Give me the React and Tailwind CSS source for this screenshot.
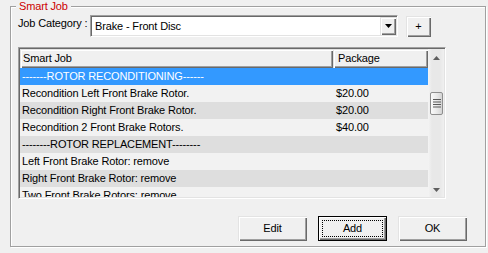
import React from "react";

const raised =
  "bg-[#f0f0f0] shadow-[inset_1px_1px_0_#e3e3e3,inset_2px_2px_0_#ffffff,inset_-1px_-1px_0_#696969,inset_-2px_-2px_0_#a0a0a0]";

const rows = [
  { t: "-------ROTOR RECONDITIONING------", p: "" },
  { t: "Recondition Left Front Brake Rotor.", p: "$20.00" },
  { t: "Recondition Right Front Brake Rotor.", p: "$20.00" },
  { t: "Recondition 2 Front Brake Rotors.", p: "$40.00" },
  { t: "--------ROTOR REPLACEMENT--------", p: "" },
  { t: "Left Front Brake Rotor: remove", p: "" },
  { t: "Right Front Brake Rotor: remove", p: "" },
  { t: "Two Front Brake Rotors: remove", p: "" },
];

function Row({ r, i }) {
  const sel = i === 0;
  const alt = i % 2 === 0 && !sel;
  const bg = sel ? "bg-[#3399ff] text-white" : alt ? "bg-[#dedede]" : "bg-[#f2f2f2]";
  return (
    <div className={`flex h-[17px] shrink-0 leading-[17px] whitespace-nowrap ${bg}`}>
      <div className="w-[313px] pl-[2px] overflow-hidden">{r.t}</div>
      <div className="w-[95px] pl-[3px] overflow-hidden">{r.p}</div>
    </div>
  );
}

function Scrollbar() {
  return (
    <div className="w-[16px] h-full flex flex-col bg-[linear-gradient(to_right,#f4f4f4,#e8e8e8_25%,#e8e8e8_75%,#f0f0f0)]">
      <div className="h-[17px] flex items-center justify-center pl-[1px] pt-[1px]">
        <svg width="7" height="4" viewBox="0 0 7 4">
          <polygon points="3.5,0 7,4 0,4" fill="#5e5e5e" />
        </svg>
      </div>
      <div className="flex-1 flex flex-col">
        <div className="mt-[26px] ml-[2px] w-[13px] h-[23px] rounded-[2px] border border-[#8e8e8e] bg-[linear-gradient(to_right,#fbfbfb,#e6e6e6_60%,#d4d4d4)] flex items-center justify-center">
          <svg width="8" height="9" viewBox="0 0 8 9">
            <rect x="0" y="0" width="8" height="1" fill="#5a5a5a" />
            <rect x="0" y="2.5" width="8" height="1" fill="#5a5a5a" />
            <rect x="0" y="5" width="8" height="1" fill="#5a5a5a" />
            <rect x="0" y="7.5" width="8" height="1" fill="#5a5a5a" />
          </svg>
        </div>
      </div>
      <div className="h-[17px] flex items-center justify-center pl-[1px] pt-[3px]">
        <svg width="7" height="4" viewBox="0 0 7 4">
          <polygon points="0,0 7,0 3.5,4" fill="#5e5e5e" />
        </svg>
      </div>
    </div>
  );
}

export default function App() {
  return (
    <div className="w-[488px] h-[253px] bg-[#f0f0f0] pt-[6px] pl-[10px] font-['Liberation_Sans',Arial,sans-serif] text-[11px] tracking-[-0.15px] text-black overflow-hidden">
      <div className="relative w-[476px] h-[241px] border border-[#a0a0a0] shadow-[inset_1px_1px_0_#ffffff,1px_1px_0_#ffffff] pt-[8px] pl-[7px] flex flex-col">
        <div className="absolute left-[5px] top-[-7px] px-[3px] bg-[#f0f0f0] text-[#cc0000] leading-[13px]">
          Smart Job
        </div>

        <div className="flex items-start h-[22px]">
          <div className="w-[72px] leading-[17px] whitespace-nowrap">Job Category :</div>
          <div className="w-[308px] h-[22px] border border-t-[#a0a0a0] border-l-[#a0a0a0] border-r-white border-b-white shadow-[inset_1px_1px_0_#696969,inset_-1px_-1px_0_#e3e3e3] p-px">
            <div className="h-full bg-white flex items-center">
              <div className="flex-1 pl-[3px] leading-[18px] whitespace-nowrap">Brake - Front Disc</div>
              <div className={`w-[16px] h-full flex items-center justify-center ${raised}`}>
                <svg width="7" height="4" viewBox="0 0 7 4">
                  <polygon points="0,0 7,0 3.5,4" fill="#000" />
                </svg>
              </div>
            </div>
          </div>
          <div className={`ml-[8px] mt-[1px] w-[25px] h-[21px] flex items-center justify-center leading-none ${raised}`}>
            +
          </div>
        </div>

        <div className="mt-[10px] w-[428px] h-[152px] border border-t-[#a0a0a0] border-l-[#a0a0a0] border-r-white border-b-white shadow-[inset_1px_1px_0_#696969,inset_-1px_-1px_0_#e3e3e3] p-px">
          <div className="h-full flex overflow-hidden bg-[#f2f2f2]">
            <div className="w-[408px] flex flex-col overflow-hidden">
              <div className="flex h-[19px] shrink-0 leading-[17px]">
                <div className={`w-[313px] pl-[3px] pt-px ${raised}`}>Smart Job</div>
                <div className={`w-[95px] pl-[5px] pt-px ${raised}`}>Package</div>
              </div>
              {rows.map((r, i) => (
                <Row key={i} r={r} i={i} />
              ))}
            </div>
            <Scrollbar />
          </div>
        </div>

        <div className="mt-[17px] flex justify-end gap-[11px] pr-[18px]">
          <div className={`w-[69px] h-[25px] flex items-center justify-center ${raised}`}>Edit</div>
          <div className="w-[69px] h-[25px] border border-black p-[3px] bg-[#f0f0f0] shadow-[inset_1px_1px_0_#ffffff,inset_-1px_-1px_0_#696969,inset_-2px_-2px_0_#a0a0a0]">
            <div className="h-full border border-dotted border-black flex items-center justify-center">Add</div>
          </div>
          <div className={`w-[69px] h-[25px] flex items-center justify-center ${raised}`}>OK</div>
        </div>
      </div>
    </div>
  );
}
